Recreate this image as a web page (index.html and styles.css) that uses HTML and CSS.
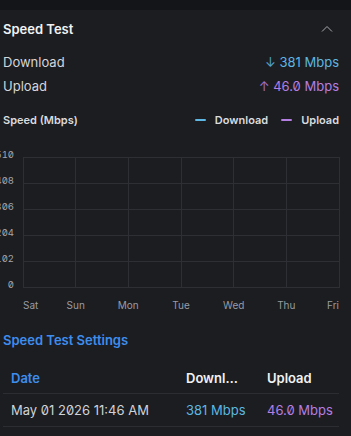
FILE: index.html
```html
<!DOCTYPE html>
<html>
<head>
<meta charset="utf-8">
<link rel="stylesheet" href="styles.css">
</head>
<body>
<div class="strip"></div>
<section class="panel">
  <div class="head">
    <span class="title">Speed Test</span>
    <svg class="chev" width="12" height="8" viewBox="0 0 12 8"><path d="M1 6.5 L6 1.5 L11 6.5" fill="none" stroke="#a9abb0" stroke-width="1"/></svg>
  </div>
  <div class="stats">
    <div class="stat"><span class="lbl">Download</span><span class="val dl"><span class="arr">↓</span> 381 Mbps</span></div>
    <div class="stat"><span class="lbl">Upload</span><span class="val ul"><span class="arr">↑</span> 46.0 Mbps</span></div>
  </div>
  <div class="chart-head">
    <span class="ctitle">Speed (Mbps)</span>
    <div class="legend">
      <span class="item"><span class="dash dl-bg"></span>Download</span>
      <span class="item"><span class="dash ul-bg"></span>Upload</span>
    </div>
  </div>
  <svg class="chart" width="351" height="199" viewBox="0 130 351 199">
    <g stroke="#2e2f34" stroke-width="1">
      <line x1="23" y1="157.5" x2="340" y2="157.5"/>
      <line x1="23" y1="183.5" x2="340" y2="183.5"/>
      <line x1="23" y1="209.5" x2="340" y2="209.5"/>
      <line x1="23" y1="235.5" x2="340" y2="235.5"/>
      <line x1="23" y1="261.5" x2="340" y2="261.5"/>
      <line x1="23" y1="287.5" x2="340" y2="287.5"/>
      <line x1="23.5" y1="157" x2="23.5" y2="288"/>
      <line x1="75.5" y1="157" x2="75.5" y2="288"/>
      <line x1="128.5" y1="157" x2="128.5" y2="288"/>
      <line x1="181.5" y1="157" x2="181.5" y2="288"/>
      <line x1="233.5" y1="157" x2="233.5" y2="288"/>
      <line x1="286.5" y1="157" x2="286.5" y2="288"/>
      <line x1="339.5" y1="157" x2="339.5" y2="288"/>
    </g>
    <g class="ylab" text-anchor="end">
      <text x="14" y="157.5">510</text>
      <text x="14" y="183.5">408</text>
      <text x="14" y="209.5">306</text>
      <text x="14" y="235.5">204</text>
      <text x="14" y="261.5">102</text>
      <text x="14" y="287.5">0</text>
    </g>
    <g class="xlab">
      <text x="23" y="308.5">Sat</text>
      <text x="75.7" y="308.5" text-anchor="middle">Sun</text>
      <text x="128.3" y="308.5" text-anchor="middle">Mon</text>
      <text x="181" y="308.5" text-anchor="middle">Tue</text>
      <text x="233.7" y="308.5" text-anchor="middle">Wed</text>
      <text x="286.3" y="308.5" text-anchor="middle">Thu</text>
      <text x="339" y="308.5" text-anchor="end">Fri</text>
    </g>
  </svg>
  <div class="settings">Speed Test Settings</div>
  <table class="tbl">
    <colgroup><col class="c1"><col class="c2"><col class="c3"></colgroup>
    <thead>
      <tr><th class="date-h">Date</th><th><span class="trunc">Download</span></th><th>Upload</th></tr>
    </thead>
    <tbody>
      <tr><td>May 01 2026 11:46 AM</td><td class="dl">381 Mbps</td><td class="ul">46.0 Mbps</td></tr>
    </tbody>
  </table>
</section>
</body>
</html>
```
FILE: styles.css
```css
html, body {
  margin: 0;
  padding: 0;
  background: #1c1d21;
}
body {
  width: 351px;
  height: 436px;
  overflow: hidden;
  font-family: Inter, "Liberation Sans", sans-serif;
  font-feature-settings: "zero" 1;
  color: #d6d8dc;
}
.strip {
  height: 10px;
  background: #141519;
}
.panel {
  padding: 0 12px 0 3px;
}
.head {
  height: 38px;
  display: flex;
  align-items: center;
  justify-content: space-between;
}
.title {
  font-size: 13px;
  font-weight: 600;
  color: #f1f2f4;
}
.chev {
  margin-right: 6px;
  margin-top: -1px;
}
.stats {
  padding-top: 2px;
}
.stat {
  height: 24px;
  display: flex;
  align-items: center;
  justify-content: space-between;
  font-size: 13px;
}
.lbl {
  color: #d4d6da;
}
.dl { color: #5db7e2; }
.ul { color: #b47ee3; }
.arr {
  opacity: 0.85;
}
.chart-head {
  margin-top: 12px;
  height: 20px;
  display: flex;
  align-items: center;
  justify-content: space-between;
  font-size: 11px;
  font-weight: 600;
  color: #d9dbdf;
}
.legend {
  display: flex;
  gap: 13px;
}
.item {
  display: flex;
  align-items: center;
  gap: 9px;
}
.dash {
  width: 11px;
  height: 2px;
  border-radius: 1px;
}
.dl-bg { background: #5db7e2; }
.ul-bg { background: #b47ee3; }
.chart {
  display: block;
  margin-left: -3px;
}
.ylab text {
  font-family: Inter, "DejaVu Sans Mono", monospace;
  font-feature-settings: "zero" 1, "tnum" 1;
  font-size: 9.5px;
  fill: #a3a6ac;
}
.xlab text {
  font-size: 10px;
  fill: #989ca3;
}
.settings {
  height: 22px;
  line-height: 22px;
  font-size: 13px;
  font-weight: 600;
  color: #3e8ded;
}
.tbl {
  margin-top: 12px;
  width: 336px;
  table-layout: fixed;
  border-collapse: collapse;
  font-size: 13px;
}
.c1 { width: 175px; }
.c2 { width: 81px; }
.c3 { width: 80px; }
.tbl th, .tbl td {
  text-align: left;
  padding: 0 0 0 8px;
  white-space: nowrap;
  border-bottom: 1px solid #2c2d32;
}
.tbl th {
  height: 30px;
  font-weight: 600;
  color: #f1f2f4;
}
.tbl th.date-h {
  color: #3e8ded;
}
.tbl td {
  height: 32px;
  color: #cfd2d7;
}
.tbl td.dl { color: #5db7e2; }
.tbl td.ul { color: #b47ee3; }
.trunc {
  display: block;
  max-width: 55px;
  overflow: hidden;
  text-overflow: ellipsis;
}
```
